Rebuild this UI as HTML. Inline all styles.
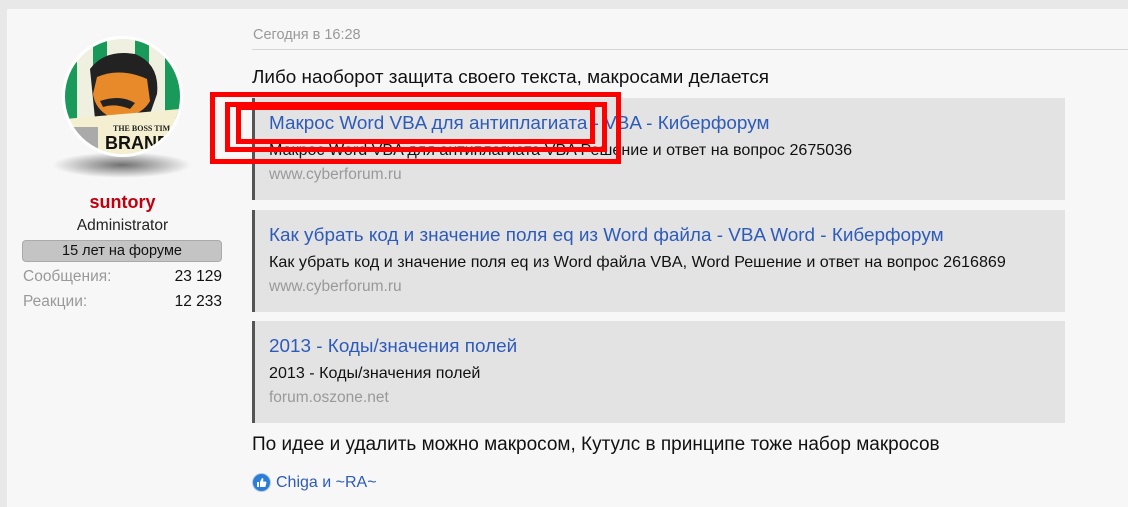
<!DOCTYPE html>
<html><head><meta charset="utf-8"><style>
*{margin:0;padding:0;box-sizing:border-box}
body{width:1128px;height:507px;background:#e8e8e8;font-family:"Liberation Sans",sans-serif;position:relative;overflow:hidden}
.panel{position:absolute;left:7px;top:9px;width:1121px;height:498px;background:#f7f7f7}
.abs{position:absolute;white-space:nowrap}
.q{position:absolute;left:252px;width:813px;height:102px;background:#e3e3e3;border-left:3px solid #555}
.q .t{position:absolute;left:14px;top:15px;font-size:18.9px;color:#2d5bbb}
.q .d{position:absolute;left:14px;top:43px;font-size:16.1px;color:#111}
.q .u{position:absolute;left:14px;top:68px;font-size:15.5px;color:#999}
.r{position:absolute;border:5px solid #f00}
</style></head><body>
<div class="panel"></div>
<div class="abs" style="left:52px;top:152px;width:140px;height:26px;border-radius:50%;background:radial-gradient(ellipse at center,rgba(0,0,0,.55),rgba(0,0,0,0) 70%)"></div>
<div class="abs" style="left:62px;top:36px;width:121px;height:121px;border-radius:50%;background:#fff;padding:3px">
<svg width="115" height="115" viewBox="0 0 115 115" style="border-radius:50%;display:block">
<rect width="115" height="115" fill="#f0f0e0"/>
<rect x="0" width="12" height="80" fill="#1a9a5a"/><rect x="28" width="14" height="30" fill="#1a9a5a"/><rect x="70" width="14" height="30" fill="#1a9a5a"/><rect x="100" width="15" height="80" fill="#1a9a5a"/>
<path d="M25 30 Q40 10 70 15 Q95 25 92 55 L85 75 L30 80 Z" fill="#222"/>
<path d="M32 38 Q55 28 82 40 L85 62 Q75 80 45 78 Q30 70 28 55 Z" fill="#e88a2a"/>
<path d="M35 62 Q55 55 70 64 L65 70 Q50 64 38 68 Z" fill="#222"/>
<path d="M0 80 L115 70 L115 115 L0 115 Z" fill="#f3efd0"/>
<text x="48" y="92" font-size="8" font-weight="bold" fill="#222" font-family="Liberation Serif">THE BOSS TIM</text>
<text x="40" y="110" font-size="18" font-weight="bold" fill="#111" font-family="Liberation Sans">BRAND</text>
<rect x="5" y="88" width="28" height="24" fill="#aaa"/>
</svg></div>
<div class="abs" style="left:0;width:245px;text-align:center;top:192px;font-size:18px;font-weight:bold;color:#c0000c">suntory</div>
<div class="abs" style="left:0;width:245px;text-align:center;top:217px;font-size:15.5px;color:#222">Administrator</div>
<div class="abs" style="left:22px;top:240px;width:200px;height:22px;background:#c4c4c4;border:1px solid #aaa;border-radius:4px;text-align:center;font-size:14.5px;line-height:20px;color:#111">15 лет на форуме</div>
<div class="abs" style="left:23px;top:268px;font-size:15.5px;color:#999">Сообщения:</div>
<div class="abs" style="left:122px;width:100px;text-align:right;top:268px;font-size:15.5px;color:#111">23 129</div>
<div class="abs" style="left:23px;top:293px;font-size:15.5px;color:#999">Реакции:</div>
<div class="abs" style="left:122px;width:100px;text-align:right;top:293px;font-size:15.5px;color:#111">12 233</div>
<div class="abs" style="left:253px;top:27px;font-size:14.5px;color:#999">Сегодня в 16:28</div>
<div class="abs" style="left:252px;top:49px;width:876px;height:1px;background:#d6d6d6"></div>
<div class="abs" style="left:252px;top:67px;font-size:18.9px;color:#111">Либо наоборот защита своего текста, макросами делается</div>
<div class="q" style="top:98px"><div class="t">Макрос Word VBA для антиплагиата - VBA - Киберфорум</div><div class="d">Макрос Word VBA для антиплагиата VBA Решение и ответ на вопрос 2675036</div><div class="u">www.cyberforum.ru</div></div>
<div class="q" style="top:210px"><div class="t">Как убрать код и значение поля eq из Word файла - VBA Word - Киберфорум</div><div class="d">Как убрать код и значение поля eq из Word файла VBA, Word Решение и ответ на вопрос 2616869</div><div class="u">www.cyberforum.ru</div></div>
<div class="q" style="top:321px"><div class="t">2013 - Коды/значения полей</div><div class="d">2013 - Коды/значения полей</div><div class="u">forum.oszone.net</div></div>
<div class="abs" style="left:252px;top:434px;font-size:19px;color:#111">По идее и удалить можно макросом, Кутулс в принципе тоже набор макросов</div>
<div class="abs" style="left:252px;top:473px;width:19px;height:19px;border-radius:50%;background:#2a7ed8;border:1px solid #bcd"><svg width="17" height="17" viewBox="0 0 17 17"><path d="M4 8h2v5H4z M7 8l2-4c1 0 1.5 .5 1.3 2L10 7.5h2.5c.8 0 1 .6.9 1.2l-.8 3.5c-.2.6-.6.8-1.2.8H7z" fill="#fff"/></svg></div>
<div class="abs" style="left:276px;top:474px;font-size:16px;color:#2d5bbb">Chiga и ~RA~</div>
<div class="r" style="left:210px;top:92px;width:411px;height:72px"></div>
<div class="r" style="left:225px;top:102px;width:382px;height:50px"></div>
<div class="r" style="left:236px;top:105px;width:359px;height:39px"></div>
</body></html>
